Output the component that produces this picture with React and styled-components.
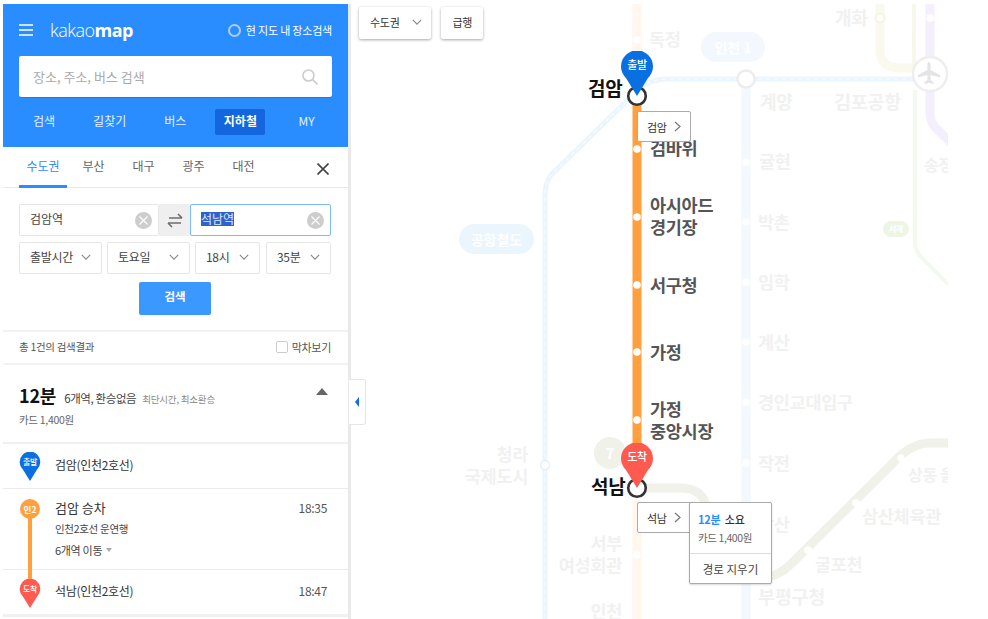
import React from 'react';
import styled, { createGlobalStyle } from 'styled-components';

const Global = createGlobalStyle`
  html, body { margin: 0; background: #fff; }
  body { font-family: "Noto Sans CJK KR", "Noto Sans", sans-serif; color: #333; }
`;

const Page = styled.div`
  display: flex; align-items: flex-start;
  width: 988px; height: 619px; box-sizing: border-box;
  padding: 4px 0 0 3px; overflow: hidden;
`;
const Sidebar = styled.aside`
  position: relative; flex: none; box-sizing: content-box;
  width: 345px; height: 615px; border-right: 3px solid #e9e9e9; background: #fff;
`;
const Header = styled.header`
  background: #2a8dff; height: 143px; box-sizing: border-box; padding: 0 16px;
  display: flex; flex-direction: column;
`;
const TopRow = styled.div`
  display: flex; align-items: center; height: 52px;
`;
const Logo = styled.div`
  margin-left: 17px; font: 300 18px/1 "Open Sans", sans-serif; color: #fff; letter-spacing: -.5px;
  b { font-weight: 700; font-family: "Open Sans", sans-serif; }
`;
const ScopeToggle = styled.div`
  margin-left: auto; display: flex; align-items: center; gap: 5px;
  font-size: 11px; color: #fff; letter-spacing: -.2px;
  i { width: 9px; height: 9px; border: 2px solid #a9d0ff; border-radius: 50%; }
`;
const SearchBox = styled.div`
  height: 41px; background: #fff; border-radius: 2px; display: flex; align-items: center;
  padding: 0 14px; justify-content: space-between; font-size: 13px; color: #aaa;
  box-shadow: 0 1px 1px rgba(0,0,0,.15);
`;
const MainNav = styled.nav`
  display: flex; align-items: center; height: 50px; padding: 0 0 0 14px;
`;
const NavItem = styled.span`
  margin-right: ${p => p.$gap}px; height: 26px; line-height: 24px;
  padding: 0 ${p => p.$pad || 0}px; border-radius: 2px; font-size: 12px; color: ${p => p.$on ? '#fff' : '#e4f0ff'};
  font-weight: ${p => p.$on ? 700 : 400}; background: ${p => p.$on ? '#1366dd' : 'transparent'};
`;
const Tabs = styled.div`
  display: flex; height: 41px; box-sizing: border-box; padding-left: 16px;
  border-bottom: 1px solid #e8e8e8;
`;
const Tab = styled.div`
  width: ${p => p.$w}px; margin-right: ${p => p.$m}px; text-align: center; box-sizing: border-box;
  font-size: 12px; line-height: 38px; height: 41px; color: ${p => p.$on ? '#2a8dff' : '#666'};
  border-bottom: ${p => p.$on ? '3px solid #2a8dff' : '0'};
`;
const CloseBtn = styled.svg`
  margin: 16px 19px 0 auto;
`;
const Form = styled.div`
  padding: 16px 17px 0 16px; display: flex; flex-direction: column; gap: 6px;
`;
const Endpoints = styled.div`
  display: flex; height: 32px;
`;
const Endpoint = styled.div`
  flex: none; width: ${p => p.$w}px; box-sizing: border-box; display: flex; align-items: center;
  justify-content: space-between; padding: 0 6px 0 10px; font-size: 12px; color: #444;
  border: 1px solid ${p => p.$active ? '#7cb9ff' : '#e6e6e6'}; border-radius: 2px;
`;
const EndpointText = styled.span`
  margin-top: -3px;
`;
const Selected = styled(EndpointText)`
  background: #2f62c9; color: #dfe8ff; line-height: 14px;
`;
const Clear = styled.span`
  width: 17px; height: 17px; border-radius: 50%; background: #cdcdcd; display: flex;
  align-items: center; justify-content: center;
`;
const Swap = styled.div`
  flex: none; width: 31px; background: #efefef; display: flex; align-items: center; justify-content: center;
`;
const Selects = styled.div`
  display: flex; gap: 5px; height: 32px;
`;
const Select = styled.div`
  width: ${p => p.$w}px; margin-left: ${p => p.$ml || 0}px; box-sizing: border-box; border: 1px solid #e6e6e6; border-radius: 2px;
  display: flex; align-items: center; justify-content: space-between;
  padding: 0 10px 3px 10px; font-size: 12px; color: #444; letter-spacing: -.3px;
`;
const SearchBtn = styled.button`
  align-self: center; margin: 2px 0 0 0; width: 72px; height: 33px; border: 0; border-radius: 2px; padding: 0 0 5px;
  background: #3a98ff; color: #fff; font: 700 11.5px "Noto Sans CJK KR", sans-serif;
`;
const ResultBar = styled.div`
  margin-top: 15px; height: 35px; box-sizing: border-box; display: flex; align-items: center; justify-content: space-between;
  padding: 0 17px 2px 16px; border-top: 2px solid #f2f2f2; border-bottom: 2px solid #f2f2f2;
  font-size: 10.5px; color: #555; letter-spacing: -.3px;
`;
const LastTrain = styled.label`
  display: flex; align-items: center; gap: 4px; font-size: 11px;
  i { width: 10px; height: 10px; border: 1px solid #ccc; border-radius: 2px; }
`;
const Summary = styled.div`
  position: relative; height: 79px; box-sizing: border-box; padding: 17px 16px 0; border-bottom: 2px solid #f0f0f0;
`;
const SummaryTop = styled.div`
  display: flex; align-items: baseline; height: 30px;
`;
const Minutes = styled.strong`
  font-size: 18px; font-weight: 700; color: #111; letter-spacing: -.2px;
`;
const Routes = styled.span`
  margin-left: 8px; font-size: 11.5px; color: #444; letter-spacing: -.4px;
`;
const Tags = styled.span`
  margin-left: 6px; font-size: 9.5px; color: #888; letter-spacing: -.2px;
`;
const Fare = styled.div`
  font-size: 10.5px; color: #666; letter-spacing: -.3px;
`;
const Caret = styled.span`
  position: absolute; right: 20px; top: 23px; width: 0; height: 0;
  border-left: 6px solid transparent; border-right: 6px solid transparent; border-bottom: 7px solid #666;
`;
const StepRow = styled.div`
  height: ${p => p.$h}px; box-sizing: border-box; padding: ${p => p.$pt || 0}px 21px 0 16px;
  border-bottom: ${p => p.$thick ? '3px solid #f0f0f0' : '1px solid #eaeaea'};
  display: flex; gap: 14px; align-items: ${p => p.$top ? 'flex-start' : 'center'};
`;
const StepName = styled.div`
  margin-top: -3px; font-size: 12px; color: #333; letter-spacing: -.3px;
`;
const Time = styled.span`
  margin-left: auto; margin-top: -3px; font-size: 12px; color: #555; letter-spacing: -.3px;
`;
const BoardTime = styled(Time)`
  margin-top: 0; line-height: 18px;
`;
const StepBody = styled.div`
  display: flex; flex-direction: column; margin-top: -3px;
`;
const Board = styled.div`
  font-size: 13px; line-height: 24px; color: #333;
`;
const Direction = styled.div`
  font-size: 10.5px; line-height: 16px; margin-top: 1px; color: #444; letter-spacing: -.3px;
`;
const Move = styled.div`
  font-size: 11px; line-height: 16px; margin-top: 5px; color: #444; letter-spacing: -.3px;
  display: flex; align-items: center; gap: 4px;
  i { border-left: 3px solid transparent; border-right: 3px solid transparent; border-top: 4px solid #aaa; }
`;
const Rail = styled.div`
  flex: none; width: 22px; display: flex; flex-direction: column; align-items: center;
`;
const LineBar = styled.span`
  width: 4px; height: 70px; margin-top: -2px; background: #ffa040;
`;
const LineBadge = styled.span`
  width: 20px; height: 20px; border-radius: 50%;
  background: #ffa040; color: #fff; font-size: 8.5px; font-weight: 700; text-align: center; line-height: 20px;
`;
const PinWrap = styled.span`
  position: ${p => p.$x === undefined ? 'relative' : 'absolute'}; flex: none;
  left: ${p => p.$x === undefined ? 'auto' : `${p.$x}px`}; top: ${p => p.$y === undefined ? 'auto' : `${p.$y}px`};
  margin-top: ${p => p.$mt || 0}px;
  width: ${p => p.$w}px; height: ${p => p.$h}px; z-index: 3;
  svg { display: block; width: 100%; height: 100%; }
  b {
    position: absolute; inset: ${p => p.$w > 25 ? 4 : 3}px 0 auto; text-align: center; color: #fff;
    font-size: ${p => p.$fs}px; line-height: ${p => p.$w * .62}px; font-weight: 500; letter-spacing: -.3px;
  }
`;
const Collapse = styled.div`
  position: absolute; left: 346px; top: 375px; width: 17px; height: 46px; box-sizing: border-box;
  background: #fff; border: 1px solid #e6e6e6; border-left: 0; border-radius: 0 3px 3px 0;
  display: flex; align-items: center; justify-content: center; z-index: 5;
  i { border-top: 5px solid transparent; border-bottom: 5px solid transparent; border-right: 4px solid #0a6fe8; margin-left: -1px; }
`;

const MapArea = styled.main`
  position: relative; flex: none; width: 597px; height: 615px; overflow: hidden; background: #fff;
`;
const MapLines = styled.svg`
  position: absolute; left: 0; top: 0;
`;
const MapTools = styled.div`
  position: absolute; left: 8px; top: 3px; display: flex; gap: 10px; z-index: 6;
`;
const MapTool = styled.div`
  height: 32px; box-sizing: border-box; padding: 0 ${p => p.$pad}px 2px 11px; display: flex; align-items: center; gap: 13px;
  background: #fff; border-radius: 2px; box-shadow: 0 1px 3px rgba(0,0,0,.35);
  font-size: 11px; color: #333; letter-spacing: -.3px;
`;
const Station = styled.span`
  position: absolute; left: ${p => p.$x - 351}px; top: ${p => p.$y - 5}px; transform: translateY(-50%);
  white-space: pre; line-height: 22px; font-size: ${p => p.$size || 17.5}px; font-weight: 700;
  letter-spacing: -.3px; color: ${p => p.$c || '#f1f1f1'}; text-align: ${p => p.$right ? 'right' : 'left'};
  width: ${p => p.$w ? p.$w + 'px' : 'auto'}; z-index: ${p => p.$z || 1};
`;
const LineTag = styled.span`
  position: absolute; left: ${p => p.$x - 351}px; top: ${p => p.$y - 4}px; width: ${p => p.$w}px; height: ${p => p.$h}px;
  border-radius: ${p => p.$h / 2}px; background: ${p => p.$bg}; color: #fff; font-weight: 700; font-size: ${p => p.$fs}px;
  line-height: ${p => p.$h}px; text-align: center; z-index: 1;
`;
const Callout = styled.div`
  position: absolute; left: ${p => p.$x - 351}px; top: ${p => p.$y - 4}px; width: 54px; height: 31px; box-sizing: border-box;
  background: #fff; border: 1px solid #aaa; border-radius: 2px; z-index: 4; display: flex; align-items: center;
  justify-content: space-between; padding: 0 9px; font-size: 11px; color: #333; letter-spacing: -.3px;
`;
const InfoCard = styled.div`
  position: absolute; left: ${689 - 351}px; top: ${502 - 4}px; width: 83px; height: 82px; box-sizing: border-box;
  background: #fff; border: 1px solid #aaa; border-radius: 2px; z-index: 5; box-shadow: 0 1px 2px rgba(0,0,0,.15);
`;
const InfoTop = styled.div`
  height: 51px; box-sizing: border-box; padding: 8px 8px 0; border-bottom: 1px solid #ddd;
`;
const InfoTitle = styled.div`
  font-size: 11px; font-weight: 500; color: #333; line-height: 16px; letter-spacing: -.2px; word-spacing: 2px;
  b { color: #2a8dff; font-weight: 700; }
`;
const InfoFare = styled.div`
  font-size: 10.5px; color: #666; line-height: 16px; margin-top: 3px; letter-spacing: -.4px;
`;
const ClearRoute = styled.div`
  text-align: center; font-size: 11.5px; line-height: 30px; color: #444;
`;

function Pin({ color, label, x, y, w, h, fs, mt }) {
  return (
    <PinWrap $x={x} $y={y} $w={w} $h={h} $fs={fs} $mt={mt}>
      <svg viewBox="0 0 32 45">
        <path d="M16 45 L5 27 A16 16 0 1 1 27 27 Z" fill={color} />
      </svg>
      <b>{label}</b>
    </PinWrap>
  );
}
const Chevron = ({ size = 10, color = '#888' }) => (
  <svg width={size} height={size} viewBox="0 0 12 12" fill="none" stroke={color} strokeWidth="1.4">
    <path d="M1 3.5 L6 8.5 L11 3.5" />
  </svg>
);
const ChevronRight = () => (
  <svg width="7" height="11" viewBox="0 0 7 11" fill="none" stroke="#777" strokeWidth="1.2">
    <path d="M1 1 L6 5.5 L1 10" />
  </svg>
);
const ClearIcon = () => (
  <Clear>
    <svg width="9" height="9" viewBox="0 0 9 9" stroke="#fff" strokeWidth="1.2"><path d="M.5.5l8 8M8.5.5l-8 8" /></svg>
  </Clear>
);

const p = (x, y) => `${x - 351} ${y - 4}`;
const airportLine = `M${p(930, 79)} H${668 - 351} Q${650 - 351} ${79 - 4} ${640 - 351} ${88 - 4} L${552 - 351} ${174 - 4} Q${545 - 351} ${182 - 4} ${545 - 351} ${195 - 4} V615`;
const dots = [[637, 40], [637, 149], [637, 217], [637, 285], [637, 352], [637, 420], [637, 555],
  [746, 162], [746, 222], [746, 282], [746, 342], [746, 402], [746, 463],
  [808, 550], [856, 503], [901, 458], [930, 18]];

export default function App() {
  return (
    <Page>
      <Global />
      <Sidebar>
        <Header>
          <TopRow>
            <svg width="14" height="12" viewBox="0 0 14 12" stroke="#fff" strokeWidth="1.5"><path d="M0 1h14M0 6h14M0 11h14" /></svg>
            <Logo>kakao<b>map</b></Logo>
            <ScopeToggle><i />현 지도 내 장소검색</ScopeToggle>
          </TopRow>
          <SearchBox>
            장소, 주소, 버스 검색
            <svg width="16" height="16" viewBox="0 0 16 16" fill="none" stroke="#ccc" strokeWidth="1.6"><circle cx="6.5" cy="6.5" r="5.5" /><path d="M10.5 10.5L15.5 15.5" /></svg>
          </SearchBox>
          <MainNav>
            <NavItem $gap={38}>검색</NavItem>
            <NavItem $gap={38}>길찾기</NavItem>
            <NavItem $gap={29}>버스</NavItem>
            <NavItem $gap={33} $on $pad={8.5}>지하철</NavItem>
            <NavItem $gap={0}>MY</NavItem>
          </MainNav>
        </Header>
        <Tabs>
          <Tab $on $w={48} $m={10}>수도권</Tab>
          <Tab $w={33} $m={17}>부산</Tab>
          <Tab $w={33} $m={17}>대구</Tab>
          <Tab $w={33} $m={17}>광주</Tab>
          <Tab $w={33} $m={17}>대전</Tab>
          <CloseBtn width="12" height="12" viewBox="0 0 12 12" stroke="#444" strokeWidth="1.6"><path d="M.5.5l11 11M11.5.5l-11 11" /></CloseBtn>
        </Tabs>
        <Form>
          <Endpoints>
            <Endpoint $w={140}><EndpointText>검암역</EndpointText><ClearIcon /></Endpoint>
            <Swap>
              <svg width="18" height="15" viewBox="0 0 18 15" fill="none" stroke="#6f6f6f" strokeWidth="1.7"><path d="M3 5h13M12 1l4 4M15 10H2M6 14L2 10" /></svg>
            </Swap>
            <Endpoint $w={141} $active><Selected>석남역</Selected><ClearIcon /></Endpoint>
          </Endpoints>
          <Selects>
            <Select $w={83}>출발시간<Chevron /></Select>
            <Select $w={83}>토요일<Chevron /></Select>
            <Select $w={65}>18시<Chevron /></Select>
            <Select $w={65} $ml={1}>35분<Chevron /></Select>
          </Selects>
          <SearchBtn>검색</SearchBtn>
        </Form>
        <ResultBar>
          <span>총 1건의 검색결과</span>
          <LastTrain><i />막차보기</LastTrain>
        </ResultBar>
        <Summary>
          <SummaryTop>
            <Minutes>12분</Minutes>
            <Routes>6개역, 환승없음</Routes>
            <Tags>최단시간, 최소환승</Tags>
          </SummaryTop>
          <Fare>카드 1,400원</Fare>
          <Caret />
        </Summary>
        <StepRow $h={45}>
          <Pin color="#0a6fe0" label="출발" w={22} h={29} fs={8} />
          <StepName>검암(인천2호선)</StepName>
        </StepRow>
        <StepRow $h={81} $top $pt={10}>
          <Rail>
            <LineBadge>인2</LineBadge>
            <LineBar />
          </Rail>
          <StepBody>
            <Board>검암 승차</Board>
            <Direction>인천2호선 운연행</Direction>
            <Move>6개역 이동<i /></Move>
          </StepBody>
          <BoardTime>18:35</BoardTime>
        </StepRow>
        <StepRow $h={47} $thick>
          <Pin color="#ff5a50" label="도착" w={22} h={29} fs={8} mt={3} />
          <StepName>석남(인천2호선)</StepName>
          <Time>18:47</Time>
        </StepRow>
        <Collapse><i /></Collapse>
      </Sidebar>

      <MapArea>
        <MapLines width="597" height="615" viewBox="0 0 597 615" fill="none">
          <path d={`M${p(880, -4)} V${50 - 4} Q${880 - 351} ${68 - 4} ${900 - 351} ${68 - 4} H${915 - 351}`} stroke="#fbf8ee" strokeWidth="9" />
          <path d={`M${p(914, -4)} V${66 - 4}`} stroke="#f8f7ec" strokeWidth="4" />
          <path d={`M${p(930, -4)} V110 Q${930 - 351} ${125 - 4} ${940 - 351} ${132 - 4} L${960 - 351} ${152 - 4}`} stroke="#f3effc" strokeWidth="9" />
          <path d={`M${p(915, 90)} V${243 - 4} Q${915 - 351} ${250 - 4} ${920 - 351} ${256 - 4} L${960 - 351} ${296 - 4}`} stroke="#f3f9ee" strokeWidth="4" />
          <path d={airportLine} stroke="#eaf5fd" strokeWidth="5" />
          <path d={airportLine} stroke="#fff" strokeWidth="1.2" strokeDasharray="4 4" opacity=".7" />
          <path d={`M${p(637, 4)} V100`} stroke="#fff6ee" strokeWidth="9" />
          <path d={`M${p(746, 79)} V615`} stroke="#f2f8fd" strokeWidth="9" />
          <path d={`M${p(637, 500)} V615`} stroke="#fff6ee" strokeWidth="9" />
          <path d={`M${p(637, 488)} H${680 - 351} Q${707 - 351} ${488 - 4} ${707 - 351} ${515 - 4} V${579 - 4} H${755 - 351} Q${775 - 351} ${579 - 4} ${790 - 351} ${565 - 4} L${890 - 351} ${466 - 4} Q${910 - 351} ${443 - 4} ${930 - 351} ${443 - 4} H${960 - 351}`} stroke="#f0f2e9" strokeWidth="9" />
          <circle cx={610 - 351} cy={453 - 4} r="16" fill="#f0f2e9" />
          <path d={`M${p(637, 100)} V${470 - 4}`} stroke="#ffa040" strokeWidth="9" />
          {dots.map(([x, y]) => <circle key={`${x}-${y}`} cx={x - 351} cy={y - 4} r="3.8" fill="#fff" />)}
          <circle cx={545 - 351} cy={465 - 4} r="4.5" fill="#fff" stroke="#e3f0fb" strokeWidth="1.5" />
          <circle cx={880 - 351} cy={18 - 4} r="4.5" fill="#fff" stroke="#f7f2e2" strokeWidth="2" />
          <circle cx={746 - 351} cy={79 - 4} r="8.5" fill="#fff" stroke="#ececec" strokeWidth="2.5" />
          <circle cx={930 - 351} cy={74 - 4} r="17" fill="#fff" stroke="#eeeeee" strokeWidth="2.5" />
          <path transform={`translate(${929 - 351 - 13} ${73 - 4 - 13})`} d="M13 2 c1 0 1.6 1.2 1.6 3 V10 L24 15 V17.5 L14.6 15 V20 L17.5 22.2 V24 L13 22.8 L8.5 24 V22.2 L11.4 20 V15 L2 17.5 V15 L11.4 10 V5 C11.4 3.2 12 2 13 2Z" fill="#e4e4e4" />
          <circle cx={637 - 351} cy={96 - 4} r="8.8" fill="#fff" stroke="#333" strokeWidth="2.6" />
          <circle cx={637 - 351} cy={488 - 4} r="8.8" fill="#fff" stroke="#333" strokeWidth="2.6" />
        </MapLines>

        <MapTools>
          <MapTool $pad={9}>수도권<Chevron /></MapTool>
          <MapTool $pad={11}>급행</MapTool>
        </MapTools>

        <LineTag $x={701} $y={32} $w={64} $h={30} $bg="#f2f8fd" $fs={14}>인천 1</LineTag>
        <LineTag $x={459} $y={224} $w={75} $h={30} $bg="#ebf5fd" $fs={14}>공항철도</LineTag>
        <LineTag $x={883} $y={221} $w={26} $h={16} $bg="#edf6e4" $fs={8}>서해</LineTag>
        <LineTag $x={594} $y={437} $w={32} $h={32} $bg="transparent" $fs={15}>7</LineTag>

        <Station $x={649} $y={40}>독정</Station>
        <Station $x={835} $y={18} $size={18}>개화</Station>
        <Station $x={760} $y={102} $size={18}>계양</Station>
        <Station $x={834} $y={102} $size={18.5}>김포공항</Station>
        <Station $x={759} $y={162}>귤현</Station>
        <Station $x={758} $y={223}>박촌</Station>
        <Station $x={758} $y={283}>임학</Station>
        <Station $x={758} $y={343}>계산</Station>
        <Station $x={758} $y={403}>경인교대입구</Station>
        <Station $x={758} $y={464}>작전</Station>
        <Station $x={758} $y={525}>갈산</Station>
        <Station $x={758} $y={597} $size={18.5}>부평구청</Station>
        <Station $x={924} $y={165} $size={16}>송정</Station>
        <Station $x={908} $y={475} $size={16}>상동 을</Station>
        <Station $x={862} $y={517}>삼산체육관</Station>
        <Station $x={815} $y={565}>굴포천</Station>
        <Station $x={459} $y={466} $w={69} $right>{'청라\n국제도시'}</Station>
        <Station $x={552} $y={555} $w={70} $right>{'서부\n여성회관'}</Station>
        <Station $x={590} $y={612} $w={32} $right>인천</Station>

        <Station $x={650} $y={149} $c="#555">검바위</Station>
        <Station $x={650} $y={217} $c="#555">{'아시아드\n경기장'}</Station>
        <Station $x={650} $y={286} $c="#555">서구청</Station>
        <Station $x={650} $y={353} $c="#555">가정</Station>
        <Station $x={650} $y={421} $c="#555">{'가정\n중앙시장'}</Station>

        <Station $x={588} $y={89} $c="#111" $size={19} $z={3}>검암</Station>
        <Station $x={591} $y={487} $c="#111" $size={19} $z={3}>석남</Station>

        <Pin color="#0a6fe0" label="출발" x={270} y={47} w={32} h={45} fs={11} />
        <Pin color="#ff5a50" label="도착" x={270} y={439} w={32} h={45} fs={11} />

        <Callout $x={637} $y={111}>검암<ChevronRight /></Callout>
        <Callout $x={637} $y={502}>석남<ChevronRight /></Callout>
        <InfoCard>
          <InfoTop>
            <InfoTitle><b>12분</b> 소요</InfoTitle>
            <InfoFare>카드 1,400원</InfoFare>
          </InfoTop>
          <ClearRoute>경로 지우기</ClearRoute>
        </InfoCard>
      </MapArea>
    </Page>
  );
}
